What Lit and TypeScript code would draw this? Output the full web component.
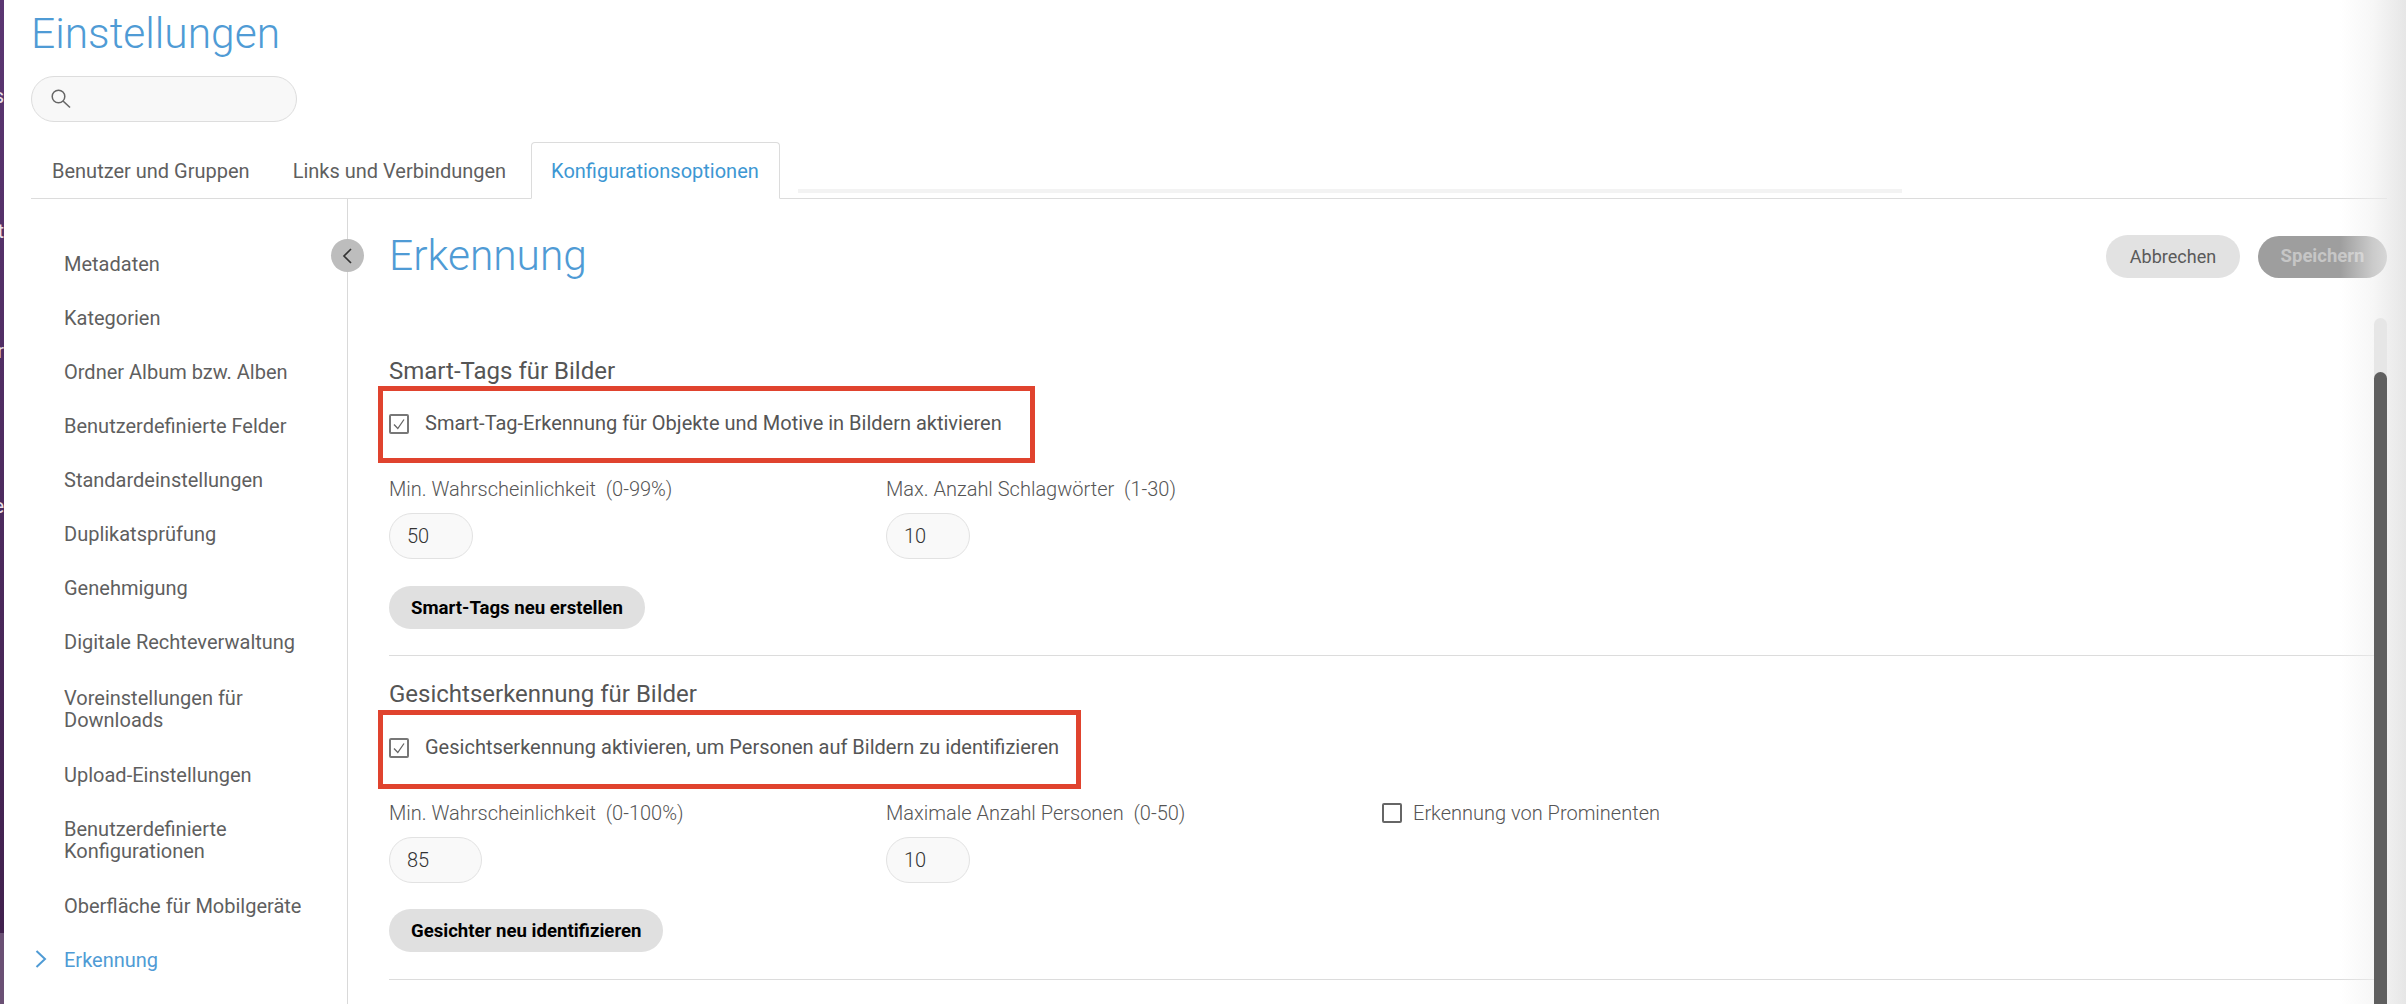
import { LitElement, html, css } from "lit";
import { customElement } from "lit/decorators.js";

const NAV: [string, string][] = [
  ["Metadaten", ""],
  ["Kategorien", ""],
  ["Ordner Album bzw. Alben", ""],
  ["Benutzerdefinierte Felder", ""],
  ["Standardeinstellungen", ""],
  ["Duplikatsprüfung", ""],
  ["Genehmigung", ""],
  ["Digitale Rechteverwaltung", ""],
  ["Voreinstellungen für Downloads", "wrap"],
  ["Upload-Einstellungen", ""],
  ["Benutzerdefinierte Konfigurationen", "wrap2"],
  ["Oberfläche für Mobilgeräte", ""],
];

const tick = html`<svg class="tick" viewBox="0 0 20 20"><path d="M5 10.5 L8.8 14.5 L15 5.5" fill="none" stroke="#666" stroke-width="1.3"/></svg>`;

@customElement("app-root")
export class AppRoot extends LitElement {
  static styles = css`
    :host {
      display: block;
      width: 2406px;
      height: 1004px;
      overflow: hidden;
      background: #fff;
      font-family: Roboto, "Liberation Sans", sans-serif;
      color: #5a5a5a;
    }
    * { box-sizing: border-box; }
    .shell { display: flex; height: 1004px; position: relative; }
    .rail {
      width: 4px;
      flex: none;
      overflow: hidden;
      padding-top: 84px;
      background: linear-gradient(#5b3672, #3f1f4b);
      color: #e8e0ea;
      font-size: 20px;
      line-height: 24px;
      display: flex;
      flex-direction: column;
      align-items: flex-end;
      position: relative;
    }
    .rail span { height: 24px; display: block; }
    .rail .r2 { margin-top: 111px; }
    .rail .r3 { margin-top: 96px; }
    .rail .r4 { margin-top: 131px; }
    .rail .lower { margin-top: auto; height: 71px; width: 4px; background: #6a5074; }
    .main { flex: 1; min-width: 0; padding: 0 19px 0 27px; display: flex; flex-direction: column; }
    h1 {
      margin: 0;
      padding-top: 9px;
      font-size: 42.5px;
      line-height: 50px;
      font-weight: 300;
      color: #4f9bd5;
    }
    .search {
      margin-top: 17px;
      width: 266px;
      height: 46px;
      flex: none;
      border: 1px solid #ddd;
      border-radius: 23px;
      background: #f8f8f8;
      display: flex;
      align-items: center;
      padding-left: 18px;
    }
    .search svg { width: 22px; height: 22px; display: block; }
    .tabs {
      margin-top: 20px;
      height: 57px;
      flex: none;
      display: flex;
      align-items: stretch;
      border-bottom: 1px solid #dcdcdc;
    }
    .tab {
      font-size: 20px;
      padding: 1px 21px 0;
      display: flex;
      align-items: center;
      color: #5f5f5f;
    }
    .tab.t1 { margin-right: 1px; }
    .tab.t2 { margin-right: 4px; }
    .tab.active {
      color: #3d97d3;
      border: 1px solid #dcdcdc;
      border-bottom: 1px solid #fff;
      border-radius: 4px 4px 0 0;
      height: 57px;
      padding: 1px 20px 0 19px;
      background: #fff;
    }
    .tabrest {
      width: 1104px;
      margin: 47px 0 0 18px;
      height: 4px;
      background: #f3f3f3;
    }
    .body { flex: 1; display: flex; min-height: 0; }
    .side {
      width: 317px;
      flex: none;
      border-right: 1px solid #d9d9d9;
      padding: 38px 0 0 33px;
      position: relative;
    }
    .nav { list-style: none; margin: 0; padding: 0; }
    .nav li {
      font-size: 20px;
      line-height: 22px;
      padding: 16px 30px 16px 0;
      color: #5f5f5f;
      position: relative;
    }
    .nav li.wrap { padding-top: 18px; padding-bottom: 17px; }
    .nav li.wrap2 { padding-bottom: 17px; }
    .nav li.current { color: #4f9bd5; }
    .nav li svg { position: absolute; left: -29px; top: 16px; width: 12px; height: 20px; }
    .collapse {
      position: absolute;
      right: -17px;
      top: 40px;
      width: 33px;
      height: 33px;
      border-radius: 50%;
      background: #bdbdbd;
      display: flex;
      align-items: center;
      justify-content: center;
    }
    .collapse svg { width: 12px; height: 18px; display: block; margin-left: -2px; }
    .content { flex: 1; min-width: 0; padding: 0 0 0 41px; position: relative; }
    .head {
      display: flex;
      align-items: flex-start;
      justify-content: space-between;
      height: 140px;
    }
    h2 {
      margin: 0;
      padding-top: 32px;
      font-size: 42.5px;
      line-height: 50px;
      font-weight: 300;
      color: #4f9bd5;
    }
    .actions { display: flex; gap: 18px; padding-top: 36px; }
    .btn {
      height: 43px;
      border-radius: 22px;
      display: flex;
      align-items: center;
      justify-content: center;
      font-size: 18px;
    }
    .cancel { width: 134px; background: #e2e2e2; color: #5a5a5a; }
    .save {
      width: 129px;
      margin-top: 1px;
      height: 42px;
      padding-bottom: 2px;
      background: #9e9e9e;
      color: #c6c6c6;
      font-weight: 700;
      font-size: 18.5px;
    }
    .section { border-bottom: 1px solid #dcdcdc; margin-right: 13px; padding-bottom: 26px; }
    .section.s1 { padding-top: 19px; }
    .section.s2 { padding-top: 25px; padding-bottom: 27px; }
    h3 {
      margin: 0;
      font-size: 24px;
      line-height: 26px;
      font-weight: 400;
      color: #555;
    }
    .check {
      display: flex;
      align-items: center;
      height: 20px;
      gap: 16px;
      font-size: 20px;
      color: #555;
      position: relative;
      margin-top: 30px;
    }
    .check .txt { margin-top: -2px; }
    .s2 .check.lead { margin-top: 31px; }
    .mark {
      position: absolute;
      left: -11px;
      top: -28px;
      height: 77px;
      border: 5px solid #e0432e;
      pointer-events: none;
    }
    .mark.m1 { width: 657px; }
    .mark.m2 { width: 703px; height: 79px; }
    .box {
      width: 20px;
      height: 20px;
      flex: none;
      border: 2px solid #777;
      border-radius: 2px;
      position: relative;
    }
    .tick { position: absolute; left: -2px; top: -2px; width: 20px; height: 20px; display: block; }
    .fields {
      display: grid;
      grid-template-columns: repeat(3, 497px);
      margin-top: 43px;
    }
    .label { font-size: 20px; line-height: 24px; font-weight: 300; color: #555; white-space: pre; }
    .input {
      margin-top: 12px;
      height: 46px;
      border: 1px solid #e2e2e2;
      border-radius: 23px;
      background: #f9f9f9;
      padding-left: 17px;
      display: flex;
      align-items: center;
      font-size: 20px;
      font-weight: 300;
      color: #333;
      width: 84px;
    }
    .input.wide { width: 93px; }
    .opt-wrap { height: 24px; display: flex; align-items: center; }
    .opt-wrap .check { margin-top: 0; gap: 11px; font-weight: 300; }
    .opt-wrap .box { border-width: 2.5px; border-color: #666; margin-left: -1px; }
    .action {
      display: inline-flex;
      align-items: center;
      height: 43px;
      padding: 0 22px;
      margin-top: 27px;
      border-radius: 22px;
      background: #e0e0e0;
      font-size: 18.6px;
      font-weight: 700;
      color: #000;
    }
    .s2 .action { margin-top: 26px; }
    .fade {
      position: absolute;
      top: 0;
      right: 0;
      bottom: 0;
      width: 66px;
      background: linear-gradient(90deg, rgba(232, 232, 232, 0), rgba(240, 240, 240, 0.55) 50%, #e6e6e6);
      pointer-events: none;
    }
    .track {
      position: absolute;
      left: 2374px;
      top: 318px;
      bottom: 0;
      width: 13px;
      border-radius: 7px 7px 0 0;
      background: #e6e6e6;
      padding-top: 54px;
      display: flex;
    }
    .thumb { flex: 1; border-radius: 7px 7px 0 0; background: #5f5f5f; }
  `;

  render() {
    return html`
      <div class="shell">
        <div class="rail">
          <span class="r1">s</span><span class="r2">t</span><span class="r3">r</span><span class="r4">e</span>
          <div class="lower"></div>
        </div>
        <div class="main">
          <h1>Einstellungen</h1>
          <div class="search">
            <svg viewBox="0 0 22 22">
              <circle cx="8.5" cy="8.5" r="6.3" fill="none" stroke="#666" stroke-width="1.5" />
              <path d="M13 13 L20 19.5" fill="none" stroke="#666" stroke-width="1.6" />
            </svg>
          </div>
          <div class="tabs">
            <div class="tab t1">Benutzer und Gruppen</div>
            <div class="tab t2">Links und Verbindungen</div>
            <div class="tab active">Konfigurationsoptionen</div>
            <div class="tabrest"></div>
          </div>
          <div class="body">
            <aside class="side">
              <ul class="nav">
                ${NAV.map(([n, c]) => html`<li class=${c}>${n}</li>`)}
                <li class="current">
                  <svg viewBox="0 0 12 20"><path d="M1.5 2 L10 10 L1.5 18" fill="none" stroke="#4f9bd5" stroke-width="2" /></svg>
                  Erkennung
                </li>
              </ul>
              <div class="collapse">
                <svg viewBox="0 0 12 18"><path d="M10 2 L3 9 L10 16" fill="none" stroke="#333" stroke-width="1.7" /></svg>
              </div>
            </aside>
            <section class="content">
              <div class="head">
                <h2>Erkennung</h2>
                <div class="actions">
                  <div class="btn cancel">Abbrechen</div>
                  <div class="btn save">Speichern</div>
                </div>
              </div>
              <div class="section s1">
                <h3>Smart-Tags für Bilder</h3>
                <div class="check lead">
                  <span class="box">${tick}</span>
                  <span class="txt">Smart-Tag-Erkennung für Objekte und Motive in Bildern aktivieren</span>
                  <div class="mark m1"></div>
                </div>
                <div class="fields">
                  <div>
                    <div class="label">Min. Wahrscheinlichkeit  (0-99%)</div>
                    <div class="input">50</div>
                  </div>
                  <div>
                    <div class="label">Max. Anzahl Schlagwörter  (1-30)</div>
                    <div class="input">10</div>
                  </div>
                </div>
                <div class="action">Smart-Tags neu erstellen</div>
              </div>
              <div class="section s2">
                <h3>Gesichtserkennung für Bilder</h3>
                <div class="check lead">
                  <span class="box">${tick}</span>
                  <span class="txt">Gesichtserkennung aktivieren, um Personen auf Bildern zu identifizieren</span>
                  <div class="mark m2"></div>
                </div>
                <div class="fields">
                  <div>
                    <div class="label">Min. Wahrscheinlichkeit  (0-100%)</div>
                    <div class="input wide">85</div>
                  </div>
                  <div>
                    <div class="label">Maximale Anzahl Personen  (0-50)</div>
                    <div class="input">10</div>
                  </div>
                  <div class="opt-wrap">
                    <div class="check"><span class="box"></span>Erkennung von Prominenten</div>
                  </div>
                </div>
                <div class="action">Gesichter neu identifizieren</div>
              </div>
            </section>
          </div>
        </div>
        <div class="fade"></div>
        <div class="track"><div class="thumb"></div></div>
      </div>
    `;
  }
}
